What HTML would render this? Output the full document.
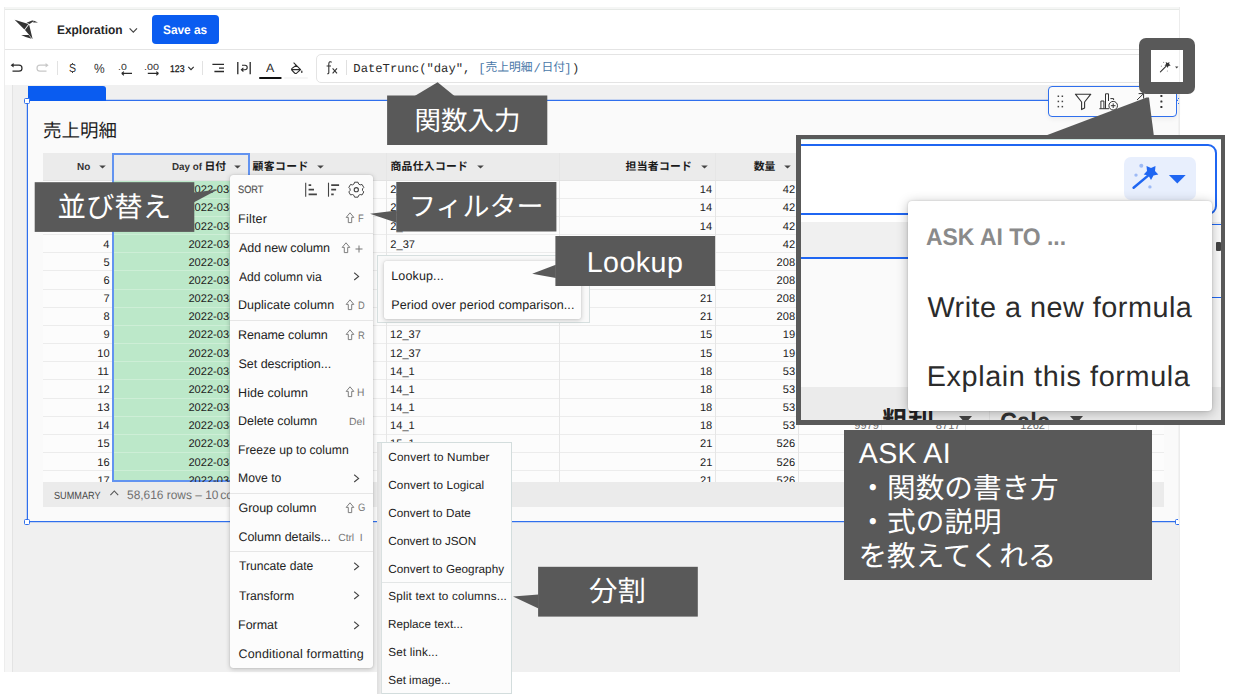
<!DOCTYPE html>
<html lang="ja"><head><meta charset="utf-8"><title>Exploration</title>
<style>
html,body{margin:0;padding:0;background:#fff;}
body{width:1236px;height:697px;position:relative;overflow:hidden;font-family:"Liberation Sans",sans-serif;font-kerning:none;text-rendering:geometricPrecision;}
.b{position:absolute;}
.t{position:absolute;white-space:pre;display:block;}
.g{position:absolute;display:block;overflow:visible;}
</style></head><body>
<div class="b" style="left:4px;top:7px;width:1176px;height:665px;background:#ffffff;"></div>
<div class="b" style="left:4px;top:7px;width:1176px;height:3px;background:#f5f6f5;"></div>
<div class="b" style="left:4px;top:9px;width:1176px;height:1px;background:#e6e9e6;"></div>
<div class="b" style="left:4px;top:49px;width:1176px;height:1px;background:#e4e4e4;"></div>
<div class="b" style="left:4px;top:85px;width:1176px;height:587px;background:#f0f0f0;"></div>
<div class="b" style="left:4px;top:85px;width:8.5px;height:587px;background:#f6f6f6;"></div>
<div class="b" style="left:12px;top:85px;width:1px;height:587px;background:#e3e3e3;"></div>
<div class="b" style="left:4px;top:7px;width:1px;height:665px;background:#ededed;"></div>
<svg class="g" style="left:12px;top:16px" width="30" height="28" viewBox="12 16 30 28"><g fill="#333"><path d="M14.6 19.8 L28.4 23.9 L24.4 29.4 Z"/><path d="M29.1 24.4 L25 30 L32.6 38.9 Z"/><path d="M26.6 22.7 L32.6 20.2 L33.2 21.4 L29.6 23.9 Z"/><path d="M33.4 20.6 L38 22.4 L33.2 22.6 Z"/><path d="M21.2 35 L28.6 35.1 L31.6 38.8 Q26 37.6 21.2 35 Z"/></g></svg>
<span class="t" style="left:56.7px;top:23px;font:700 12.4px/14px 'Liberation Sans',sans-serif;color:#262626;transform:scaleX(0.962);transform-origin:0 0;">Exploration</span>
<svg class="g" style="left:128px;top:26px" width="11" height="9" viewBox="0 0 11 9"><path d="M1.6 2.4 L5.3 6.1 L9 2.4" fill="none" stroke="#444" stroke-width="1.2"/></svg>
<div class="b" style="left:152px;top:15px;width:67.3px;height:29px;background:#0a5cf0;border-radius:4px;"></div>
<span class="t" style="left:163.46px;top:23px;font:700 12.4px/14px 'Liberation Sans',sans-serif;color:#ffffff;transform:scaleX(0.957);transform-origin:0 0;">Save as</span>
<svg class="g" style="left:0;top:55px" width="320" height="30" viewBox="0 55 320 30"><path d="M12.5 65.2 H19 a3 3 0 0 1 0 6 H12.5" fill="none" stroke="#2a2a2a" stroke-width="1.2"/><path d="M13.6 62.9 L10.6 65.2 L13.6 67.5 Z" fill="#2a2a2a"/><path d="M46.5 65.2 H40 a3 3 0 0 0 0 6 H46.5" fill="none" stroke="#c8c8c8" stroke-width="1.2"/><path d="M45.6 62.9 L48.6 65.2 L45.6 67.5 Z" fill="#c8c8c8"/><rect x="57" y="61" width="1" height="14" fill="#e2e2e2"/><rect x="202" y="61" width="1" height="14" fill="#e2e2e2"/><path d="M121.6 73.4 H132 M121.6 73.4 l2.3 -1.8 M121.6 73.4 l2.3 1.8" stroke="#2a2a2a" stroke-width="1.1" fill="none"/><path d="M147.8 73.4 H158.6 M158.6 73.4 l-2.3 -1.8 M158.6 73.4 l-2.3 1.8" stroke="#2a2a2a" stroke-width="1.1" fill="none"/><path d="M188.3 66.9 L191 69.7 L193.7 66.9" fill="none" stroke="#2a2a2a" stroke-width="1.1"/><path d="M212.4 64.4 H224 M219 68.1 H224 M214.4 71.5 H224" stroke="#2a2a2a" stroke-width="1.3" fill="none"/><path d="M237.8 62 V74.3 M250.2 62 V74.3" stroke="#2a2a2a" stroke-width="1.3" fill="none"/><path d="M242 65.3 H245 a2.2 2.2 0 0 1 0 4.4 H241.6 M243.4 67.9 L241.4 69.7 L243.4 71.5" stroke="#2a2a2a" stroke-width="1.1" fill="none"/><rect x="259" y="77" width="22.7" height="2" rx="1" fill="#111"/><rect x="284" y="77" width="24" height="2" rx="1" fill="#f6f6f6"/><path d="M293.6 62.6 L300.6 69.6 L296.6 73.2 Q295.6 73.8 294.6 73 L291.8 70.2 Q291.2 69.2 292 68.4 L296.4 65.2 M292 69.6 H300.4" fill="none" stroke="#2a2a2a" stroke-width="1.1" stroke-linejoin="round"/><path d="M301.8 70.6 q1 1.6 0 2.4 q-1 -.8 0 -2.4Z" fill="#2a2a2a" stroke="#2a2a2a" stroke-width=".5"/></svg>
<span class="t" style="left:69.42px;top:61px;font:400 11.8px/14px 'Liberation Sans',sans-serif;color:#2a2a2a;transform:scaleX(0.898);transform-origin:0 0;">S</span>
<div class="b" style="left:72.4px;top:62.8px;width:1px;height:1.4px;background:#3a3a3a;"></div>
<div class="b" style="left:72.4px;top:72.2px;width:1px;height:1.2px;background:#3a3a3a;"></div>
<span class="t" style="left:93.67px;top:61px;font:400 13.2px/15px 'Liberation Sans',sans-serif;color:#333;transform:scaleX(0.908);transform-origin:0 0;">%</span>
<span class="t" style="left:117.94px;top:62px;font:400 8.8px/10px 'Liberation Sans',sans-serif;color:#2a2a2a;transform:scaleX(1.195);transform-origin:0 0;">.0</span>
<span class="t" style="left:144.11px;top:62px;font:400 8.8px/10px 'Liberation Sans',sans-serif;color:#2a2a2a;transform:scaleX(1.227);transform-origin:0 0;">.00</span>
<span class="t" style="left:170.14px;top:64px;font:400 9.8px/11px 'Liberation Sans',sans-serif;color:#111;transform:scaleX(0.890);transform-origin:0 0;-webkit-text-stroke:.25px #111;">123</span>
<span class="t" style="left:266.18px;top:61px;font:400 12px/14px 'Liberation Sans',sans-serif;color:#2a2a2a;transform:scaleX(1.031);transform-origin:0 0;">A</span>
<div class="b" style="left:315.5px;top:53.5px;width:880px;height:29px;background:#ffffff;border:1px solid #e4e4e4;border-radius:5px;box-sizing:border-box;"></div>
<div class="b" style="left:346px;top:60px;width:1px;height:15px;background:#e0e0e0;"></div>
<svg class="g" style="left:325px;top:60px" width="14" height="16" viewBox="325 60 14 16"><path d="M331.6 62.4 Q331 61.4 329.8 61.8 Q328.8 62.3 328.8 64 V72.6 Q328.7 74 327.2 73.8 M326.6 66 H331" fill="none" stroke="#333" stroke-width="1.1"/><path d="M332.6 68.4 L337 73.4 M337 68.4 L332.6 73.4" stroke="#333" stroke-width="1.1" fill="none"/></svg>
<span class="t" style="left:353.33px;top:62px;font:400 12.2px/14px 'Liberation Mono',monospace;color:#2a2a2a;">DateTrunc(&quot;day&quot;, </span>
<span class="t" style="left:478.27px;top:62px;font:400 12.2px/14px 'Liberation Mono',monospace;color:#4a78a8;">[</span>
<span class="t" style="left:485.4px;top:59px;font:400 11.8px/18px 'Liberation Mono','Noto Sans CJK JP',monospace;color:#4a78a8;">売上明細</span>
<span class="t" style="left:533.52px;top:62px;font:400 12.2px/14px 'Liberation Mono',monospace;color:#4a78a8;">/</span>
<span class="t" style="left:541.4px;top:59px;font:400 11.8px/18px 'Liberation Mono','Noto Sans CJK JP',monospace;color:#4a78a8;">日付</span>
<span class="t" style="left:564.28px;top:62px;font:400 12.2px/14px 'Liberation Mono',monospace;color:#4a78a8;">]</span>
<span class="t" style="left:572.06px;top:62px;font:400 12.2px/14px 'Liberation Mono',monospace;color:#2a2a2a;">)</span>
<div class="b" style="left:27px;top:100px;width:1160px;height:422px;background:#fafafa;border:1px solid #2f6fed;box-sizing:border-box;box-shadow:0 0 0 1px rgba(47,111,237,.22);"></div>
<div class="b" style="left:28px;top:86px;width:78px;height:14.5px;background:#0a5cf0;border-radius:0 3px 0 0;"></div>
<div class="b" style="left:24px;top:97.5px;width:6px;height:6px;background:#fff;border:1px solid #2f6fed;box-sizing:border-box;border-radius:1.5px;"></div>
<div class="b" style="left:24px;top:518.5px;width:6px;height:6px;background:#fff;border:1px solid #2f6fed;box-sizing:border-box;border-radius:1.5px;"></div>
<div class="b" style="left:1175.4px;top:518.5px;width:6px;height:6px;background:#fff;border:1px solid #2f6fed;box-sizing:border-box;border-radius:1.5px;"></div>
<div class="b" style="left:1177.6px;top:99px;width:2.4px;height:422px;background:#f2f2f2;"></div>
<div class="b" style="left:1180px;top:0px;width:56px;height:697px;background:#ffffff;"></div>
<div class="b" style="left:1179px;top:7px;width:1px;height:665px;background:#ececec;"></div>
<span class="t" style="left:43px;top:117px;font:400 18.5px/27px 'Liberation Sans','Noto Sans CJK JP',sans-serif;color:#1f1f1f;">売上明細</span>
<div class="b" style="left:42.5px;top:153.4px;width:1121px;height:328.6px;background:#fcfcfc;"></div>
<div class="b" style="left:42.5px;top:153.4px;width:1121px;height:27px;background:#ebebeb;"></div>
<div class="b" style="left:113px;top:180.4px;width:136px;height:301.6px;background:#bce8c9;"></div>
<div class="b" style="left:42.5px;top:197.81px;width:1121px;height:1px;background:#ececec;"></div>
<div class="b" style="left:113px;top:197.81px;width:136px;height:1px;background:#cdeed6;"></div>
<div class="b" style="left:42.5px;top:215.97px;width:1121px;height:1px;background:#ececec;"></div>
<div class="b" style="left:113px;top:215.97px;width:136px;height:1px;background:#cdeed6;"></div>
<div class="b" style="left:42.5px;top:234.13px;width:1121px;height:1px;background:#ececec;"></div>
<div class="b" style="left:113px;top:234.13px;width:136px;height:1px;background:#cdeed6;"></div>
<div class="b" style="left:42.5px;top:252.29px;width:1121px;height:1px;background:#ececec;"></div>
<div class="b" style="left:113px;top:252.29px;width:136px;height:1px;background:#cdeed6;"></div>
<div class="b" style="left:42.5px;top:270.45px;width:1121px;height:1px;background:#ececec;"></div>
<div class="b" style="left:113px;top:270.45px;width:136px;height:1px;background:#cdeed6;"></div>
<div class="b" style="left:42.5px;top:288.61px;width:1121px;height:1px;background:#ececec;"></div>
<div class="b" style="left:113px;top:288.61px;width:136px;height:1px;background:#cdeed6;"></div>
<div class="b" style="left:42.5px;top:306.77px;width:1121px;height:1px;background:#ececec;"></div>
<div class="b" style="left:113px;top:306.77px;width:136px;height:1px;background:#cdeed6;"></div>
<div class="b" style="left:42.5px;top:324.93px;width:1121px;height:1px;background:#ececec;"></div>
<div class="b" style="left:113px;top:324.93px;width:136px;height:1px;background:#cdeed6;"></div>
<div class="b" style="left:42.5px;top:343.09px;width:1121px;height:1px;background:#ececec;"></div>
<div class="b" style="left:113px;top:343.09px;width:136px;height:1px;background:#cdeed6;"></div>
<div class="b" style="left:42.5px;top:361.25px;width:1121px;height:1px;background:#ececec;"></div>
<div class="b" style="left:113px;top:361.25px;width:136px;height:1px;background:#cdeed6;"></div>
<div class="b" style="left:42.5px;top:379.41px;width:1121px;height:1px;background:#ececec;"></div>
<div class="b" style="left:113px;top:379.41px;width:136px;height:1px;background:#cdeed6;"></div>
<div class="b" style="left:42.5px;top:397.57px;width:1121px;height:1px;background:#ececec;"></div>
<div class="b" style="left:113px;top:397.57px;width:136px;height:1px;background:#cdeed6;"></div>
<div class="b" style="left:42.5px;top:415.73px;width:1121px;height:1px;background:#ececec;"></div>
<div class="b" style="left:113px;top:415.73px;width:136px;height:1px;background:#cdeed6;"></div>
<div class="b" style="left:42.5px;top:433.89px;width:1121px;height:1px;background:#ececec;"></div>
<div class="b" style="left:113px;top:433.89px;width:136px;height:1px;background:#cdeed6;"></div>
<div class="b" style="left:42.5px;top:452.05px;width:1121px;height:1px;background:#ececec;"></div>
<div class="b" style="left:113px;top:452.05px;width:136px;height:1px;background:#cdeed6;"></div>
<div class="b" style="left:42.5px;top:470.21px;width:1121px;height:1px;background:#ececec;"></div>
<div class="b" style="left:113px;top:470.21px;width:136px;height:1px;background:#cdeed6;"></div>
<div class="b" style="left:112.5px;top:153.4px;width:1px;height:328.6px;background:#e6e6e6;"></div>
<div class="b" style="left:248.5px;top:153.4px;width:1px;height:328.6px;background:#e6e6e6;"></div>
<div class="b" style="left:385.9px;top:153.4px;width:1px;height:328.6px;background:#e6e6e6;"></div>
<div class="b" style="left:559.3px;top:153.4px;width:1px;height:328.6px;background:#e6e6e6;"></div>
<div class="b" style="left:714.7px;top:153.4px;width:1px;height:328.6px;background:#e6e6e6;"></div>
<div class="b" style="left:798.3px;top:153.4px;width:1px;height:328.6px;background:#e6e6e6;"></div>
<div class="b" style="left:881.3px;top:153.4px;width:1px;height:328.6px;background:#e6e6e6;"></div>
<div class="b" style="left:964.5px;top:153.4px;width:1px;height:328.6px;background:#e6e6e6;"></div>
<div class="b" style="left:1048px;top:153.4px;width:1px;height:328.6px;background:#e6e6e6;"></div>
<div class="b" style="left:1135.5px;top:153.4px;width:1px;height:328.6px;background:#e6e6e6;"></div>
<div class="b" style="left:42.5px;top:179.9px;width:1121px;height:1px;background:#e2e2e2;"></div>
<div class="b" style="left:112px;top:153px;width:137.6px;height:329px;border:2px solid #6293f0;box-sizing:border-box;"></div>
<span class="t" style="left:77.13px;top:162px;font:700 10.2px/11px 'Liberation Sans',sans-serif;color:#333;transform:scaleX(0.975);transform-origin:0 0;">No</span>
<svg class="g" style="left:98.6px;top:164.8px" width="8" height="4" viewBox="0 0 8 4"><path d="M0.2 0.4 H6.8 L3.5 3.4 Z" fill="#444"/></svg>
<span class="t" style="left:172.34px;top:162px;font:700 10.2px/11px 'Liberation Sans',sans-serif;color:#333;transform:scaleX(0.964);transform-origin:0 0;">Day of</span>
<span class="t" style="left:204.5px;top:159px;font:700 10.8px/16px 'Liberation Sans','Noto Sans CJK JP',sans-serif;color:#1a1a1a;">日付</span>
<svg class="g" style="left:233.9px;top:164.8px" width="8" height="4" viewBox="0 0 8 4"><path d="M0.2 0.4 H6.8 L3.5 3.4 Z" fill="#444"/></svg>
<span class="t" style="left:252.6px;top:159px;font:700 10.8px/16px 'Liberation Sans','Noto Sans CJK JP',sans-serif;color:#1a1a1a;letter-spacing:0.4px;">顧客コード</span>
<svg class="g" style="left:316.6px;top:164.8px" width="8" height="4" viewBox="0 0 8 4"><path d="M0.2 0.4 H6.8 L3.5 3.4 Z" fill="#444"/></svg>
<span class="t" style="left:390.5px;top:159px;font:700 10.8px/16px 'Liberation Sans','Noto Sans CJK JP',sans-serif;color:#1a1a1a;letter-spacing:0.3px;">商品仕入コード</span>
<svg class="g" style="left:477px;top:164.8px" width="8" height="4" viewBox="0 0 8 4"><path d="M0.2 0.4 H6.8 L3.5 3.4 Z" fill="#444"/></svg>
<span class="t" style="left:625.6px;top:159px;font:700 10.8px/16px 'Liberation Sans','Noto Sans CJK JP',sans-serif;color:#1a1a1a;letter-spacing:0.3px;">担当者コード</span>
<svg class="g" style="left:700.8px;top:164.8px" width="8" height="4" viewBox="0 0 8 4"><path d="M0.2 0.4 H6.8 L3.5 3.4 Z" fill="#444"/></svg>
<span class="t" style="left:753.8px;top:159px;font:700 10.8px/16px 'Liberation Sans','Noto Sans CJK JP',sans-serif;color:#1a1a1a;">数量</span>
<svg class="g" style="left:784.2px;top:164.8px" width="8" height="4" viewBox="0 0 8 4"><path d="M0.2 0.4 H6.8 L3.5 3.4 Z" fill="#444"/></svg>
<div class="b" style="left:0;top:0;width:1236px;height:482px;overflow:hidden">
<span class="t" style="left:103.57px;top:184px;font:400 11.1px/12px 'Liberation Sans',sans-serif;color:#222222;">1</span>
<span class="t" style="left:188.44px;top:184px;font:400 11.1px/12px 'Liberation Sans',sans-serif;color:#222222;">2022-03-01</span>
<span class="t" style="left:103.58px;top:202px;font:400 11.1px/12px 'Liberation Sans',sans-serif;color:#222222;">2</span>
<span class="t" style="left:188.44px;top:202px;font:400 11.1px/12px 'Liberation Sans',sans-serif;color:#222222;">2022-03-01</span>
<span class="t" style="left:103.51px;top:221px;font:400 11.1px/12px 'Liberation Sans',sans-serif;color:#222222;">3</span>
<span class="t" style="left:188.44px;top:221px;font:400 11.1px/12px 'Liberation Sans',sans-serif;color:#222222;">2022-03-01</span>
<span class="t" style="left:103.35px;top:239px;font:400 11.1px/12px 'Liberation Sans',sans-serif;color:#222222;">4</span>
<span class="t" style="left:188.44px;top:239px;font:400 11.1px/12px 'Liberation Sans',sans-serif;color:#222222;">2022-03-01</span>
<span class="t" style="left:103.49px;top:257px;font:400 11.1px/12px 'Liberation Sans',sans-serif;color:#222222;">5</span>
<span class="t" style="left:188.44px;top:257px;font:400 11.1px/12px 'Liberation Sans',sans-serif;color:#222222;">2022-03-01</span>
<span class="t" style="left:103.51px;top:275px;font:400 11.1px/12px 'Liberation Sans',sans-serif;color:#222222;">6</span>
<span class="t" style="left:188.44px;top:275px;font:400 11.1px/12px 'Liberation Sans',sans-serif;color:#222222;">2022-03-01</span>
<span class="t" style="left:103.58px;top:293px;font:400 11.1px/12px 'Liberation Sans',sans-serif;color:#222222;">7</span>
<span class="t" style="left:188.44px;top:293px;font:400 11.1px/12px 'Liberation Sans',sans-serif;color:#222222;">2022-03-01</span>
<span class="t" style="left:103.51px;top:311px;font:400 11.1px/12px 'Liberation Sans',sans-serif;color:#222222;">8</span>
<span class="t" style="left:188.44px;top:311px;font:400 11.1px/12px 'Liberation Sans',sans-serif;color:#222222;">2022-03-01</span>
<span class="t" style="left:103.55px;top:329px;font:400 11.1px/12px 'Liberation Sans',sans-serif;color:#222222;">9</span>
<span class="t" style="left:188.44px;top:329px;font:400 11.1px/12px 'Liberation Sans',sans-serif;color:#222222;">2022-03-01</span>
<span class="t" style="left:97.29px;top:348px;font:400 11.1px/12px 'Liberation Sans',sans-serif;color:#222222;">10</span>
<span class="t" style="left:188.44px;top:348px;font:400 11.1px/12px 'Liberation Sans',sans-serif;color:#222222;">2022-03-01</span>
<span class="t" style="left:97.4px;top:366px;font:400 11.1px/12px 'Liberation Sans',sans-serif;color:#222222;">11</span>
<span class="t" style="left:188.44px;top:366px;font:400 11.1px/12px 'Liberation Sans',sans-serif;color:#222222;">2022-03-01</span>
<span class="t" style="left:97.41px;top:384px;font:400 11.1px/12px 'Liberation Sans',sans-serif;color:#222222;">12</span>
<span class="t" style="left:188.44px;top:384px;font:400 11.1px/12px 'Liberation Sans',sans-serif;color:#222222;">2022-03-01</span>
<span class="t" style="left:97.34px;top:402px;font:400 11.1px/12px 'Liberation Sans',sans-serif;color:#222222;">13</span>
<span class="t" style="left:188.44px;top:402px;font:400 11.1px/12px 'Liberation Sans',sans-serif;color:#222222;">2022-03-01</span>
<span class="t" style="left:97.18px;top:420px;font:400 11.1px/12px 'Liberation Sans',sans-serif;color:#222222;">14</span>
<span class="t" style="left:188.44px;top:420px;font:400 11.1px/12px 'Liberation Sans',sans-serif;color:#222222;">2022-03-01</span>
<span class="t" style="left:97.32px;top:438px;font:400 11.1px/12px 'Liberation Sans',sans-serif;color:#222222;">15</span>
<span class="t" style="left:188.44px;top:438px;font:400 11.1px/12px 'Liberation Sans',sans-serif;color:#222222;">2022-03-01</span>
<span class="t" style="left:97.34px;top:457px;font:400 11.1px/12px 'Liberation Sans',sans-serif;color:#222222;">16</span>
<span class="t" style="left:188.44px;top:457px;font:400 11.1px/12px 'Liberation Sans',sans-serif;color:#222222;">2022-03-01</span>
<span class="t" style="left:97.41px;top:475px;font:400 11.1px/12px 'Liberation Sans',sans-serif;color:#222222;">17</span>
<span class="t" style="left:188.44px;top:475px;font:400 11.1px/12px 'Liberation Sans',sans-serif;color:#222222;">2022-03-01</span>
<span class="t" style="left:390.34px;top:184px;font:400 11.1px/12px 'Liberation Sans',sans-serif;color:#222222;">2_37</span>
<span class="t" style="left:699.78px;top:184px;font:400 11.1px/12px 'Liberation Sans',sans-serif;color:#222222;">14</span>
<span class="t" style="left:782.81px;top:184px;font:400 11.1px/12px 'Liberation Sans',sans-serif;color:#222222;">42</span>
<span class="t" style="left:390.34px;top:202px;font:400 11.1px/12px 'Liberation Sans',sans-serif;color:#222222;">2_37</span>
<span class="t" style="left:699.78px;top:202px;font:400 11.1px/12px 'Liberation Sans',sans-serif;color:#222222;">14</span>
<span class="t" style="left:782.81px;top:202px;font:400 11.1px/12px 'Liberation Sans',sans-serif;color:#222222;">42</span>
<span class="t" style="left:390.34px;top:221px;font:400 11.1px/12px 'Liberation Sans',sans-serif;color:#222222;">2_37</span>
<span class="t" style="left:699.78px;top:221px;font:400 11.1px/12px 'Liberation Sans',sans-serif;color:#222222;">14</span>
<span class="t" style="left:782.81px;top:221px;font:400 11.1px/12px 'Liberation Sans',sans-serif;color:#222222;">42</span>
<span class="t" style="left:390.34px;top:239px;font:400 11.1px/12px 'Liberation Sans',sans-serif;color:#222222;">2_37</span>
<span class="t" style="left:699.78px;top:239px;font:400 11.1px/12px 'Liberation Sans',sans-serif;color:#222222;">14</span>
<span class="t" style="left:782.81px;top:239px;font:400 11.1px/12px 'Liberation Sans',sans-serif;color:#222222;">42</span>
<span class="t" style="left:390.33px;top:257px;font:400 11.1px/12px 'Liberation Sans',sans-serif;color:#222222;">7_1</span>
<span class="t" style="left:700px;top:257px;font:400 11.1px/12px 'Liberation Sans',sans-serif;color:#222222;">21</span>
<span class="t" style="left:776.56px;top:257px;font:400 11.1px/12px 'Liberation Sans',sans-serif;color:#222222;">208</span>
<span class="t" style="left:390.33px;top:275px;font:400 11.1px/12px 'Liberation Sans',sans-serif;color:#222222;">7_1</span>
<span class="t" style="left:700px;top:275px;font:400 11.1px/12px 'Liberation Sans',sans-serif;color:#222222;">21</span>
<span class="t" style="left:776.56px;top:275px;font:400 11.1px/12px 'Liberation Sans',sans-serif;color:#222222;">208</span>
<span class="t" style="left:390.33px;top:293px;font:400 11.1px/12px 'Liberation Sans',sans-serif;color:#222222;">7_1</span>
<span class="t" style="left:700px;top:293px;font:400 11.1px/12px 'Liberation Sans',sans-serif;color:#222222;">21</span>
<span class="t" style="left:776.56px;top:293px;font:400 11.1px/12px 'Liberation Sans',sans-serif;color:#222222;">208</span>
<span class="t" style="left:390.33px;top:311px;font:400 11.1px/12px 'Liberation Sans',sans-serif;color:#222222;">7_1</span>
<span class="t" style="left:700px;top:311px;font:400 11.1px/12px 'Liberation Sans',sans-serif;color:#222222;">21</span>
<span class="t" style="left:776.56px;top:311px;font:400 11.1px/12px 'Liberation Sans',sans-serif;color:#222222;">208</span>
<span class="t" style="left:390.05px;top:329px;font:400 11.1px/12px 'Liberation Sans',sans-serif;color:#222222;">12_37</span>
<span class="t" style="left:699.92px;top:329px;font:400 11.1px/12px 'Liberation Sans',sans-serif;color:#222222;">15</span>
<span class="t" style="left:782.78px;top:329px;font:400 11.1px/12px 'Liberation Sans',sans-serif;color:#222222;">19</span>
<span class="t" style="left:390.05px;top:348px;font:400 11.1px/12px 'Liberation Sans',sans-serif;color:#222222;">12_37</span>
<span class="t" style="left:699.92px;top:348px;font:400 11.1px/12px 'Liberation Sans',sans-serif;color:#222222;">15</span>
<span class="t" style="left:782.78px;top:348px;font:400 11.1px/12px 'Liberation Sans',sans-serif;color:#222222;">19</span>
<span class="t" style="left:390.05px;top:366px;font:400 11.1px/12px 'Liberation Sans',sans-serif;color:#222222;">14_1</span>
<span class="t" style="left:699.94px;top:366px;font:400 11.1px/12px 'Liberation Sans',sans-serif;color:#222222;">18</span>
<span class="t" style="left:782.74px;top:366px;font:400 11.1px/12px 'Liberation Sans',sans-serif;color:#222222;">53</span>
<span class="t" style="left:390.05px;top:384px;font:400 11.1px/12px 'Liberation Sans',sans-serif;color:#222222;">14_1</span>
<span class="t" style="left:699.94px;top:384px;font:400 11.1px/12px 'Liberation Sans',sans-serif;color:#222222;">18</span>
<span class="t" style="left:782.74px;top:384px;font:400 11.1px/12px 'Liberation Sans',sans-serif;color:#222222;">53</span>
<span class="t" style="left:390.05px;top:402px;font:400 11.1px/12px 'Liberation Sans',sans-serif;color:#222222;">14_1</span>
<span class="t" style="left:699.94px;top:402px;font:400 11.1px/12px 'Liberation Sans',sans-serif;color:#222222;">18</span>
<span class="t" style="left:782.74px;top:402px;font:400 11.1px/12px 'Liberation Sans',sans-serif;color:#222222;">53</span>
<span class="t" style="left:390.05px;top:420px;font:400 11.1px/12px 'Liberation Sans',sans-serif;color:#222222;">14_1</span>
<span class="t" style="left:699.94px;top:420px;font:400 11.1px/12px 'Liberation Sans',sans-serif;color:#222222;">18</span>
<span class="t" style="left:782.74px;top:420px;font:400 11.1px/12px 'Liberation Sans',sans-serif;color:#222222;">53</span>
<span class="t" style="left:390.05px;top:438px;font:400 11.1px/12px 'Liberation Sans',sans-serif;color:#222222;">15_1</span>
<span class="t" style="left:700px;top:438px;font:400 11.1px/12px 'Liberation Sans',sans-serif;color:#222222;">21</span>
<span class="t" style="left:776.57px;top:438px;font:400 11.1px/12px 'Liberation Sans',sans-serif;color:#222222;">526</span>
<span class="t" style="left:390.05px;top:457px;font:400 11.1px/12px 'Liberation Sans',sans-serif;color:#222222;">15_1</span>
<span class="t" style="left:700px;top:457px;font:400 11.1px/12px 'Liberation Sans',sans-serif;color:#222222;">21</span>
<span class="t" style="left:776.57px;top:457px;font:400 11.1px/12px 'Liberation Sans',sans-serif;color:#222222;">526</span>
<span class="t" style="left:390.05px;top:475px;font:400 11.1px/12px 'Liberation Sans',sans-serif;color:#222222;">15_1</span>
<span class="t" style="left:700px;top:475px;font:400 11.1px/12px 'Liberation Sans',sans-serif;color:#222222;">21</span>
<span class="t" style="left:776.57px;top:475px;font:400 11.1px/12px 'Liberation Sans',sans-serif;color:#222222;">526</span>
<span class="t" style="left:854.23px;top:420px;font:400 11.1px/12px 'Liberation Sans',sans-serif;color:#6a6a6a;">9979</span>
<span class="t" style="left:935.87px;top:420px;font:400 11.1px/12px 'Liberation Sans',sans-serif;color:#6a6a6a;">8717</span>
<span class="t" style="left:1020.37px;top:420px;font:400 11.1px/12px 'Liberation Sans',sans-serif;color:#6a6a6a;">1262</span>
</div>
<div class="b" style="left:42.5px;top:482px;width:1121px;height:25px;background:#ebebeb;"></div>
<span class="t" style="left:53.88px;top:491px;font:400 10.4px/11px 'Liberation Sans',sans-serif;color:#4a4a4a;transform:scaleX(0.879);transform-origin:0 0;">SUMMARY</span>
<svg class="g" style="left:109px;top:489px" width="11" height="8" viewBox="0 0 11 8"><path d="M1.4 6.2 L5.3 2 L9.2 6.2" fill="none" stroke="#555" stroke-width="1.1"/></svg>
<span class="t" style="left:127.42px;top:488px;font:400 12.3px/14px 'Liberation Sans',sans-serif;color:#707070;transform:scaleX(0.969);transform-origin:0 0;">58,616 rows – 10</span>
<span class="t" style="left:220.18px;top:488px;font:400 12.3px/14px 'Liberation Sans',sans-serif;color:#707070;">columns</span>
<div class="b" style="left:1048px;top:86.3px;width:129.3px;height:30.5px;background:#fbfbfb;border:1px solid #2f6fed;border-radius:4px;box-sizing:border-box;box-shadow:0 2px 5px rgba(0,0,0,.06);"></div>
<svg class="g" style="left:1050px;top:88px" width="126" height="27" viewBox="1050 88 126 27"><rect x="1057.6" y="95.5" width="1.5" height="1.5" fill="#444"/><rect x="1057.6" y="100.7" width="1.5" height="1.5" fill="#444"/><rect x="1057.6" y="105.89999999999999" width="1.5" height="1.5" fill="#444"/><rect x="1061.6" y="95.5" width="1.5" height="1.5" fill="#444"/><rect x="1061.6" y="100.7" width="1.5" height="1.5" fill="#444"/><rect x="1061.6" y="105.89999999999999" width="1.5" height="1.5" fill="#444"/><path d="M1075.4 94.2 H1090.8 L1084.6 102 V108 L1081.6 109.6 V102 Z" fill="none" stroke="#333" stroke-width="1.1" stroke-linejoin="round"/><path d="M1100.9 108.6 V101 H1103.9 V108.6 M1105.5 108.6 V93.8 H1108.5 V101 M1099.4 108.7 H1109 M1110.4 98.6 H1113.6 V100" fill="none" stroke="#333" stroke-width="1"/><circle cx="1113.2" cy="105.7" r="4.3" fill="#fbfbfb" stroke="#333" stroke-width="1"/><path d="M1110.9 105.7 H1115.5 M1113.2 103.4 V108" stroke="#333" stroke-width="1"/><path d="M1137 100 L1143.6 93.6 M1138.6 93.6 H1143.6 V98.6" fill="none" stroke="#333" stroke-width="1"/><rect x="1160.4" y="95.1" width="2" height="2" rx=".5" fill="#333"/><rect x="1160.4" y="100.5" width="2" height="2" rx=".5" fill="#333"/><rect x="1160.4" y="106" width="2" height="2" rx=".5" fill="#333"/></svg>
<div class="b" style="left:1177.6px;top:98px;width:1.6px;height:1.2px;background:#2f6fed;"></div>
<div class="b" style="left:1177.6px;top:103px;width:1.6px;height:1.2px;background:#2f6fed;"></div>
<div class="b" style="left:230.3px;top:175px;width:142.9px;height:493.4px;background:#fcfcfc;border-radius:3px;box-shadow:0 1px 5px rgba(0,0,0,.22),0 0 1px rgba(0,0,0,.25);"></div>
<span class="t" style="left:238.38px;top:184px;font:400 10.6px/12px 'Liberation Sans',sans-serif;color:#555;transform:scaleX(0.870);transform-origin:0 0;-webkit-text-stroke:.2px #555;">SORT</span>
<svg class="g" style="left:300px;top:178px" width="70" height="24" viewBox="300 178 70 24"><path d="M305.7 182.7 V196.7" stroke="#444" stroke-width="1.1" fill="none"/><path d="M308.6 185.2 H311.2 M308.6 189.7 H314 M308.6 194.3 H316.9" stroke="#444" stroke-width="1.7" fill="none"/><path d="M328.5 182.7 V196.7" stroke="#444" stroke-width="1.1" fill="none"/><path d="M331.2 185.2 H339.1 M331.2 189.7 H336.1 M331.2 194.3 H333.7" stroke="#444" stroke-width="1.7" fill="none"/><path d="M354.3 182.9 h4 l0.7 2.1 l1.8 1 l2.2 -0.5 l2 3.5 l-1.5 1.6 v2 l1.5 1.6 l-2 3.5 l-2.2 -0.5 l-1.8 1 l-0.7 2.1 h-4 l-0.7 -2.1 l-1.8 -1 l-2.2 0.5 l-2 -3.5 l1.5 -1.6 v-2 l-1.5 -1.6 l2 -3.5 l2.2 0.5 l1.8 -1 Z" transform="translate(356.3 189.7) scale(0.86) translate(-356.3 -191.6)" fill="none" stroke="#444" stroke-width="1.15" stroke-linejoin="round"/><circle cx="356.3" cy="189.7" r="2.1" fill="none" stroke="#444" stroke-width="1.1"/></svg>
<span class="t" style="left:238.07px;top:212px;font:400 12.5px/14px 'Liberation Sans',sans-serif;color:#222222;letter-spacing:0.21px;">Filter</span>
<svg class="g" style="left:344.6px;top:212.3px" width="10" height="12" viewBox="0 0 10 12"><path d="M5 0.8 L8.8 5.4 H6.7 V10.6 H3.3 V5.4 H1.2 Z" fill="none" stroke="#777" stroke-width="0.95" stroke-linejoin="round"/></svg>
<span class="t" style="left:357.83px;top:213px;font:400 10.8px/12px 'Liberation Sans',sans-serif;color:#777777;transform:scaleX(0.871);transform-origin:0 0;">F</span>
<span class="t" style="left:239.08px;top:241px;font:400 12.5px/14px 'Liberation Sans',sans-serif;color:#222222;letter-spacing:-0.11px;">Add new column</span>
<svg class="g" style="left:341px;top:241.5px" width="10" height="12" viewBox="0 0 10 12"><path d="M5 0.8 L8.8 5.4 H6.7 V10.6 H3.3 V5.4 H1.2 Z" fill="none" stroke="#777" stroke-width="0.95" stroke-linejoin="round"/></svg>
<svg class="g" style="left:355px;top:244.5px" width="8" height="8" viewBox="0 0 8 8"><path d="M0.5 4 H7.5 M4 0.5 V7.5" stroke="#777777" stroke-width="1"/></svg>
<span class="t" style="left:239.08px;top:270px;font:400 12.5px/14px 'Liberation Sans',sans-serif;color:#222222;transform:scaleX(0.968);transform-origin:0 0;">Add column via</span>
<svg class="g" style="left:353.2px;top:272.3px" width="7" height="9" viewBox="0 0 7 9"><path d="M1.2 0.8 L5.6 4.4 L1.2 8" fill="none" stroke="#444" stroke-width="1.1"/></svg>
<span class="t" style="left:238.07px;top:298px;font:400 12.5px/14px 'Liberation Sans',sans-serif;color:#222222;letter-spacing:0.02px;">Duplicate column</span>
<svg class="g" style="left:344.6px;top:299.2px" width="10" height="12" viewBox="0 0 10 12"><path d="M5 0.8 L8.8 5.4 H6.7 V10.6 H3.3 V5.4 H1.2 Z" fill="none" stroke="#777" stroke-width="0.95" stroke-linejoin="round"/></svg>
<span class="t" style="left:357.54px;top:300px;font:400 10.8px/12px 'Liberation Sans',sans-serif;color:#777777;transform:scaleX(0.860);transform-origin:0 0;">D</span>
<span class="t" style="left:238.07px;top:328px;font:400 12.5px/14px 'Liberation Sans',sans-serif;color:#222222;letter-spacing:-0.11px;">Rename column</span>
<svg class="g" style="left:344.6px;top:329px" width="10" height="12" viewBox="0 0 10 12"><path d="M5 0.8 L8.8 5.4 H6.7 V10.6 H3.3 V5.4 H1.2 Z" fill="none" stroke="#777" stroke-width="0.95" stroke-linejoin="round"/></svg>
<span class="t" style="left:357.53px;top:330px;font:400 10.8px/12px 'Liberation Sans',sans-serif;color:#777777;transform:scaleX(0.873);transform-origin:0 0;">R</span>
<span class="t" style="left:238.53px;top:357px;font:400 12.5px/14px 'Liberation Sans',sans-serif;color:#222222;letter-spacing:-0.03px;">Set description...</span>
<span class="t" style="left:238.07px;top:386px;font:400 12.5px/14px 'Liberation Sans',sans-serif;color:#222222;letter-spacing:0.05px;">Hide column</span>
<svg class="g" style="left:344.6px;top:386.4px" width="10" height="12" viewBox="0 0 10 12"><path d="M5 0.8 L8.8 5.4 H6.7 V10.6 H3.3 V5.4 H1.2 Z" fill="none" stroke="#777" stroke-width="0.95" stroke-linejoin="round"/></svg>
<span class="t" style="left:357.46px;top:387px;font:400 10.8px/12px 'Liberation Sans',sans-serif;color:#777777;transform:scaleX(0.945);transform-origin:0 0;">H</span>
<span class="t" style="left:238.07px;top:414px;font:400 12.5px/14px 'Liberation Sans',sans-serif;color:#222222;letter-spacing:-0.06px;">Delete column</span>
<span class="t" style="left:348.95px;top:417px;font:400 10.4px/11px 'Liberation Sans',sans-serif;color:#777777;letter-spacing:0.17px;">Del</span>
<span class="t" style="left:238.1px;top:443px;font:400 12.5px/14px 'Liberation Sans',sans-serif;color:#222222;transform:scaleX(0.971);transform-origin:0 0;">Freeze up to column</span>
<span class="t" style="left:238.1px;top:471px;font:400 12.5px/14px 'Liberation Sans',sans-serif;color:#222222;transform:scaleX(0.974);transform-origin:0 0;">Move to</span>
<svg class="g" style="left:353.2px;top:473.7px" width="7" height="9" viewBox="0 0 7 9"><path d="M1.2 0.8 L5.6 4.4 L1.2 8" fill="none" stroke="#444" stroke-width="1.1"/></svg>
<span class="t" style="left:238.47px;top:501px;font:400 12.5px/14px 'Liberation Sans',sans-serif;color:#222222;letter-spacing:-0.05px;">Group column</span>
<svg class="g" style="left:344.6px;top:501.6px" width="10" height="12" viewBox="0 0 10 12"><path d="M5 0.8 L8.8 5.4 H6.7 V10.6 H3.3 V5.4 H1.2 Z" fill="none" stroke="#777" stroke-width="0.95" stroke-linejoin="round"/></svg>
<span class="t" style="left:357.52px;top:502px;font:400 10.8px/12px 'Liberation Sans',sans-serif;color:#777777;transform:scaleX(0.879);transform-origin:0 0;">G</span>
<span class="t" style="left:238.47px;top:530px;font:400 12.5px/14px 'Liberation Sans',sans-serif;color:#222222;letter-spacing:-0.05px;">Column details...</span>
<span class="t" style="left:338.27px;top:533px;font:400 10.4px/11px 'Liberation Sans',sans-serif;color:#777777;letter-spacing:-0.09px;">Ctrl  I</span>
<span class="t" style="left:238.83px;top:559px;font:400 12.5px/14px 'Liberation Sans',sans-serif;color:#222222;transform:scaleX(0.969);transform-origin:0 0;">Truncate date</span>
<svg class="g" style="left:353.2px;top:562.2px" width="7" height="9" viewBox="0 0 7 9"><path d="M1.2 0.8 L5.6 4.4 L1.2 8" fill="none" stroke="#444" stroke-width="1.1"/></svg>
<span class="t" style="left:238.83px;top:589px;font:400 12.5px/14px 'Liberation Sans',sans-serif;color:#222222;transform:scaleX(0.974);transform-origin:0 0;">Transform</span>
<svg class="g" style="left:353.2px;top:591.4px" width="7" height="9" viewBox="0 0 7 9"><path d="M1.2 0.8 L5.6 4.4 L1.2 8" fill="none" stroke="#444" stroke-width="1.1"/></svg>
<span class="t" style="left:238.07px;top:618px;font:400 12.5px/14px 'Liberation Sans',sans-serif;color:#222222;letter-spacing:-0.03px;">Format</span>
<svg class="g" style="left:353.2px;top:620.6px" width="7" height="9" viewBox="0 0 7 9"><path d="M1.2 0.8 L5.6 4.4 L1.2 8" fill="none" stroke="#444" stroke-width="1.1"/></svg>
<span class="t" style="left:238.47px;top:647px;font:400 12.5px/14px 'Liberation Sans',sans-serif;color:#222222;letter-spacing:0.17px;">Conditional formatting</span>
<div class="b" style="left:230.3px;top:232.7px;width:142.9px;height:1px;background:#e6e6e6;"></div>
<div class="b" style="left:230.3px;top:319.8px;width:142.9px;height:1px;background:#e6e6e6;"></div>
<div class="b" style="left:230.3px;top:492.9px;width:142.9px;height:1px;background:#e6e6e6;"></div>
<div class="b" style="left:230.3px;top:551.1px;width:142.9px;height:1px;background:#e6e6e6;"></div>
<div class="b" style="left:376.6px;top:255.2px;width:213.6px;height:68.2px;background:#f9f9f9;border:1px solid #d6dfdf;box-sizing:border-box;"></div>
<div class="b" style="left:383.8px;top:260.8px;width:197.4px;height:58.5px;background:#fdfdfd;border-radius:2px;box-shadow:0 1px 5px rgba(0,0,0,.22),0 0 1px rgba(0,0,0,.2);"></div>
<span class="t" style="left:391.27px;top:269px;font:400 12.5px/14px 'Liberation Sans',sans-serif;color:#222222;letter-spacing:0.14px;">Lookup...</span>
<span class="t" style="left:391.27px;top:298px;font:400 12.5px/14px 'Liberation Sans',sans-serif;color:#222222;letter-spacing:0.08px;">Period over period comparison...</span>
<div class="b" style="left:376.6px;top:442.2px;width:135px;height:252px;background:#fcfcfc;border:1px solid #d3dddd;box-sizing:border-box;"></div>
<div class="b" style="left:377.2px;top:443px;width:3.6px;height:251px;background:linear-gradient(90deg,#dedede,#ececec);"></div>
<div class="b" style="left:380.8px;top:443px;width:1px;height:251px;background:#d9e0e0;"></div>
<span class="t" style="left:388.31px;top:451px;font:400 11.7px/13px 'Liberation Sans',sans-serif;color:#222222;letter-spacing:0.15px;">Convert to Number</span>
<span class="t" style="left:388.31px;top:479px;font:400 11.7px/13px 'Liberation Sans',sans-serif;color:#222222;letter-spacing:0.1px;">Convert to Logical</span>
<span class="t" style="left:388.31px;top:507px;font:400 11.7px/13px 'Liberation Sans',sans-serif;color:#222222;letter-spacing:0.04px;">Convert to Date</span>
<span class="t" style="left:388.31px;top:535px;font:400 11.7px/13px 'Liberation Sans',sans-serif;color:#222222;letter-spacing:-0.04px;">Convert to JSON</span>
<span class="t" style="left:388.31px;top:563px;font:400 11.7px/13px 'Liberation Sans',sans-serif;color:#222222;letter-spacing:0.04px;">Convert to Geography</span>
<span class="t" style="left:388.37px;top:590px;font:400 11.7px/13px 'Liberation Sans',sans-serif;color:#222222;letter-spacing:0.18px;">Split text to columns...</span>
<span class="t" style="left:387.94px;top:618px;font:400 11.7px/13px 'Liberation Sans',sans-serif;color:#222222;letter-spacing:0.02px;">Replace text...</span>
<span class="t" style="left:388.37px;top:646px;font:400 11.7px/13px 'Liberation Sans',sans-serif;color:#222222;letter-spacing:0.16px;">Set link...</span>
<span class="t" style="left:388.37px;top:674px;font:400 11.7px/13px 'Liberation Sans',sans-serif;color:#222222;letter-spacing:-0.01px;">Set image...</span>
<div class="b" style="left:381.5px;top:582.4px;width:129.5px;height:1px;background:#e3e6e6;"></div>
<div class="b" style="left:796px;top:135px;width:429px;height:290px;background:#595959;"></div>
<div class="b" style="left:801px;top:139px;width:420px;height:281px;overflow:hidden;background:#fff"><div class="b" style="left:-801px;top:-139px;width:1236px;height:697px">
<div class="b" style="left:780px;top:139px;width:460px;height:1px;background:#cfe8e3;"></div>
<div class="b" style="left:780px;top:222.4px;width:460px;height:35px;background:#f0f0f0;"></div>
<div class="b" style="left:780px;top:258px;width:460px;height:129.4px;background:#fafafa;"></div>
<div class="b" style="left:780px;top:387.4px;width:460px;height:40px;background:#ebebeb;"></div>
<div class="b" style="left:780px;top:257px;width:460px;height:2px;background:#1f66f2;"></div>
<div class="b" style="left:1150px;top:224.2px;width:120px;height:73.6px;background:#fbfbfb;border:1.8px solid #1f66f2;border-radius:9px;box-sizing:border-box;"></div>
<div class="b" style="left:1216.4px;top:242px;width:5px;height:9px;background:#444;border-radius:1px;"></div>
<div class="b" style="left:700px;top:144.4px;width:517px;height:70.6px;background:#fff;border:2px solid #1f66f2;border-radius:9px;box-sizing:border-box;"></div>
<div class="b" style="left:1124px;top:157px;width:72px;height:43px;background:#e8effd;border-radius:7px;"></div>
<svg class="g" style="left:1128px;top:160px" width="62" height="34" viewBox="1128 160 62 34"><path d="M1133.6 187.8 L1148.4 175.4" stroke="#1f66f2" stroke-width="2.5" stroke-linecap="round"/><path d="M1151.0 179.9 L1148.5 175.6 L1143.7 174.6 L1147.0 170.9 L1146.5 166.0 L1151.0 168.0 L1155.5 166.0 L1155.0 170.9 L1158.3 174.6 L1153.5 175.6 Z" fill="#1f66f2"/><circle cx="1141.3" cy="165.8" r="2" fill="#9dbaf6"/><circle cx="1136" cy="175.1" r="1.7" fill="#9dbaf6"/><circle cx="1149.9" cy="186.9" r="1.7" fill="#9dbaf6"/><path d="M1168.9 174.9 H1185.7 L1177.3 183.4 Z" fill="#1f66f2"/></svg>
<span class="t" style="left:882px;top:402px;font:700 26px/38px 'Liberation Sans','Noto Sans CJK JP',sans-serif;color:#222;">粗利</span>
<svg class="g" style="left:957.6px;top:415px" width="16" height="9" viewBox="0 0 16 9"><path d="M1 1 H14 L7.5 8.4 Z" fill="#444"/></svg>
<div class="b" style="left:989px;top:388px;width:1.4px;height:40px;background:#dedede;"></div>
<span class="t" style="left:1000.03px;top:408px;font:700 25px/28px 'Liberation Sans',sans-serif;color:#333;transform:scaleX(0.944);transform-origin:0 0;">Calc</span>
<svg class="g" style="left:1069.4px;top:415px" width="16" height="9" viewBox="0 0 16 9"><path d="M1 1 H14 L7.5 8.4 Z" fill="#444"/></svg>
<div class="b" style="left:907.8px;top:200.8px;width:304.6px;height:210.2px;background:#ffffff;border-radius:4px;box-shadow:0 2px 12px rgba(0,0,0,.28),0 0 2px rgba(0,0,0,.2);"></div>
<span class="t" style="left:926.43px;top:224px;font:700 24px/27px 'Liberation Sans',sans-serif;color:#8a8a8a;transform:scaleX(0.955);transform-origin:0 0;">ASK AI TO ...</span>
<span class="t" style="left:927.47px;top:292px;font:400 28.8px/32px 'Liberation Sans',sans-serif;color:#2b2b2b;letter-spacing:0.49px;">Write a new formula</span>
<span class="t" style="left:926.64px;top:361px;font:400 28.8px/32px 'Liberation Sans',sans-serif;color:#2b2b2b;letter-spacing:0.63px;">Explain this formula</span>
</div></div>
<svg class="g" style="left:1040px;top:92px" width="120" height="46" viewBox="1040 92 120 46"><path d="M1146.6 97.6 L1149 97.6 L1153.8 135.6 L1046 135.6 Z" fill="#595959"/></svg>
<div class="b" style="left:1139.4px;top:38.4px;width:55.6px;height:55.2px;background:#595959;border-radius:7px;"></div>
<div class="b" style="left:1150.8px;top:50px;width:32.4px;height:32.2px;background:#ffffff;"></div>
<div class="b" style="left:1179.2px;top:50px;width:1px;height:32.2px;background:#efefef;"></div>
<svg class="g" style="left:1156px;top:58px" width="26" height="18" viewBox="1156 58 26 18"><path d="M1160.4 71.8 L1166.4 65.8" stroke="#333" stroke-width="1.1" stroke-linecap="round"/><path d="M1167.6 67.9 L1166.7 65.9 L1164.5 65.6 L1166.1 64.1 L1165.7 61.9 L1167.6 63.0 L1169.5 61.9 L1169.1 64.1 L1170.7 65.6 L1168.5 65.9 Z" fill="#333"/><circle cx="1163.6" cy="62.4" r=".6" fill="#999"/><circle cx="1161.4" cy="66.2" r=".6" fill="#999"/><circle cx="1167.4" cy="71" r=".6" fill="#999"/><path d="M1175 66.4 H1178.4 L1176.7 68.4 Z" fill="#444"/></svg>
<svg class="g" style="left:386px;top:81px" width="163" height="65" viewBox="386 81 163 65"><rect x="387.1" y="95.5" width="160.2" height="49.5" fill="#595959"/><polygon points="414.7,96 437.6,82.3 454.5,96" fill="#595959"/></svg>
<span class="t" style="left:414.5px;top:101px;font:400 26.5px/41px 'Liberation Sans','Noto Sans CJK JP',sans-serif;color:#fff;">関数入力</span>
<svg class="g" style="left:33px;top:181px" width="186" height="52" viewBox="33 181 186 52"><rect x="34.7" y="182.2" width="159.6" height="49.7" fill="#595959"/><polygon points="194,192.4 218,189.4 194,202.3" fill="#595959"/></svg>
<span class="t" style="left:57.5px;top:187px;font:400 28.4px/42px 'Liberation Sans','Noto Sans CJK JP',sans-serif;color:#fff;">並び替え</span>
<svg class="g" style="left:369px;top:181px" width="189" height="52" viewBox="369 181 189 52"><rect x="396.3" y="182" width="160.1" height="49.5" fill="#595959"/><polygon points="396.6,210.5 370,213.8 396.6,222.8" fill="#595959"/></svg>
<span class="t" style="left:409px;top:188px;font:400 27px/39px 'Liberation Sans','Noto Sans CJK JP',sans-serif;color:#fff;">フィルター</span>
<svg class="g" style="left:531px;top:235px" width="186" height="52" viewBox="531 235 186 52"><rect x="555.4" y="236" width="159.7" height="50" fill="#595959"/><polygon points="555.8,264.8 532.2,273.8 555.8,277.9" fill="#595959"/></svg>
<span class="t" style="left:586.75px;top:247px;font:400 28.6px/32px 'Liberation Sans',sans-serif;color:#fff;letter-spacing:0.46px;">Lookup</span>
<svg class="g" style="left:512px;top:565px" width="187" height="53" viewBox="512 565 187 53"><rect x="538.1" y="566.8" width="159.7" height="49.8" fill="#595959"/><polygon points="538.5,594.5 513,596.4 538.5,608.5" fill="#595959"/></svg>
<span class="t" style="left:589px;top:571px;font:400 28.4px/42px 'Liberation Sans','Noto Sans CJK JP',sans-serif;color:#fff;">分割</span>
<div class="b" style="left:843.9px;top:429.8px;width:307.7px;height:150.5px;background:#595959;"></div>
<span class="t" style="left:858.84px;top:438px;font:400 28.6px/32px 'Liberation Sans',sans-serif;color:#fff;letter-spacing:0.24px;">ASK AI</span>
<span class="t" style="left:858.5px;top:468px;font:400 28.6px/42px 'Liberation Sans','Noto Sans CJK JP',sans-serif;color:#fff;">・関数の書き方</span>
<span class="t" style="left:858.5px;top:502px;font:400 28.6px/42px 'Liberation Sans','Noto Sans CJK JP',sans-serif;color:#fff;">・式の説明</span>
<span class="t" style="left:858.5px;top:536px;font:400 28.6px/42px 'Liberation Sans','Noto Sans CJK JP',sans-serif;color:#fff;">を教えてくれる</span>
</body></html>
